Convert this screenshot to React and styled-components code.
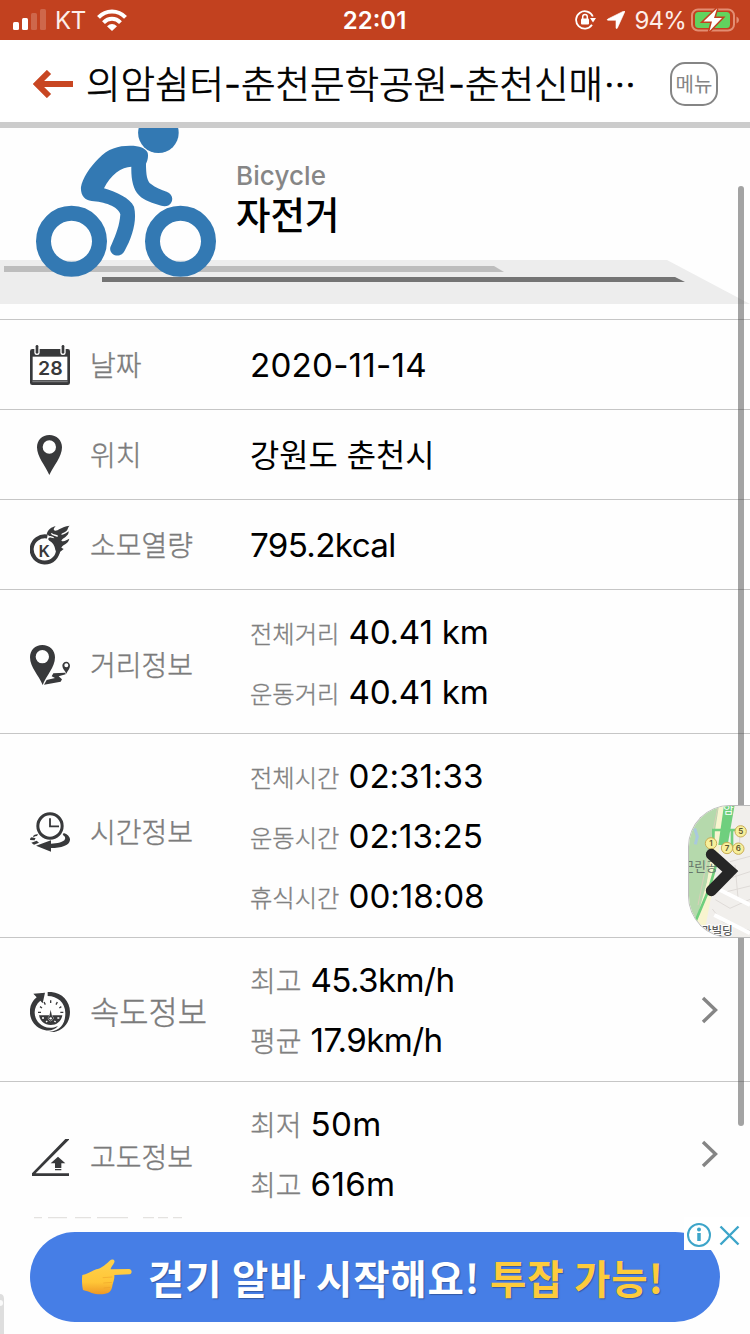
import React from "react";
import styled, { createGlobalStyle } from "styled-components";

const Global = createGlobalStyle`
  * { box-sizing: border-box; }
  body {
    margin: 0;
    background: #fefefe;
    color: #000;
    font-family: Inter, "Noto Sans CJK KR", sans-serif;
  }
`;

const Screen = styled.div`
  position: relative;
  display: flex;
  flex-direction: column;
  width: 750px;
  height: 1334px;
  overflow: hidden;
`;

const StatusBar = styled.div`
  display: flex;
  align-items: center;
  height: 40px;
  flex: none;
  padding: 0 11px 0 13px;
  background: #c2411f;
  color: #fff;
`;

const StatusSide = styled.div`
  display: flex;
  flex: 1;
  align-items: center;
  justify-content: ${(p) => (p.$end ? "flex-end" : "flex-start")};
`;

const StatusText = styled.span`
  padding-top: 1px;
  font-size: 24px;
  line-height: 40px;
  font-weight: ${(p) => (p.$bold ? 600 : 400)};
  letter-spacing: ${(p) => p.$track || 0}px;
  margin: ${(p) => p.$margin || 0};
  color: ${(p) => (p.$bold ? "#fff" : "#fdeee9")};
`;

const Header = styled.header`
  display: flex;
  align-items: center;
  height: 88px;
  flex: none;
  padding: 6px 32px 0 33px;
  border-bottom: 6px solid #ccc;
  background: #fff;
`;

const Title = styled.h1`
  flex: 1;
  margin: 1px 0 0 13px;
  font-size: 37.5px;
  line-height: 60px;
  font-weight: 300;
  -webkit-text-stroke: 0.7px #000;
  white-space: nowrap;
`;

const Dots = styled.span`
  margin-left: 1px;
  vertical-align: 11px;
  line-height: 20px;
`;

const MenuButton = styled.button`
  width: 48px;
  height: 44px;
  padding: 0;
  border: 2px solid #858585;
  border-radius: 15px;
  background: #fff;
  color: #858585;
  font: 400 20px/38px "Noto Sans CJK KR", sans-serif;
`;

const Content = styled.main`
  height: 1089px;
  flex: none;
  overflow: hidden;
`;

const Hero = styled.section`
  position: relative;
  height: 191px;
  padding: 31px 0 0 236px;
`;

const HeroArt = styled.svg`
  position: absolute;
  left: 0;
  top: 0;
`;

const HeroSub = styled.div`
  font-size: 26px;
  line-height: 34px;
  font-weight: 500;
  letter-spacing: 0.1px;
  color: #868686;
`;

const HeroName = styled.div`
  font-size: 37.5px;
  line-height: 46px;
  font-weight: 500;
`;

const Row = styled.div`
  display: flex;
  height: ${(p) => p.$height}px;
  padding-left: 30px;
  border-top: 1px solid #c6c6c6;
`;

const RowHead = styled.div`
  display: flex;
  align-items: center;
  width: 220px;
  height: 40px;
  margin-top: ${(p) => p.$top}px;
`;

const RowLabel = styled.span`
  margin-left: 20px;
  padding-top: ${(p) => p.$drop}px;
  font-size: ${(p) => (p.$large ? 31.8 : 28)}px;
  line-height: 38px;
  font-weight: 300;
  color: #7b7b7b;
  -webkit-text-stroke: 0.4px #7b7b7b;
`;

const Values = styled.div`
  flex: 1;
  padding-top: ${(p) => (p.$single ? 15 : 12)}px;
`;

const ValueLine = styled.div`
  display: flex;
  align-items: center;
  height: 60px;
`;

const Sub = styled.span`
  width: ${(p) => (p.$short ? 60.5 : 98.5)}px;
  padding-top: 3px;
  font-size: ${(p) => (p.$short ? 28 : 24.3)}px;
  line-height: 40px;
  font-weight: 300;
  color: #808080;
  -webkit-text-stroke: 0.35px #808080;
`;

const Value = styled.span`
  padding-top: ${(p) => (p.$korean ? 2 : 0)}px;
  font-size: ${(p) => (p.$korean ? 31.8 : 33.2)}px;
  line-height: 60px;
  letter-spacing: ${(p) => p.$track || 0}px;
  white-space: nowrap;
`;

const Arrow = styled.div`
  display: flex;
  align-items: center;
  padding-right: 32px;
`;

const Scrollbar = styled.div`
  position: absolute;
  left: 738px;
  top: 186px;
  width: 6px;
  height: 940px;
  border-radius: 3px;
  background: rgba(70, 70, 70, 0.49);
`;

const MapTab = styled.div`
  position: absolute;
  right: 0;
  top: 805px;
  width: 62px;
  height: 133px;
  border: 1px solid #bbb;
  border-right: 0;
  border-radius: 42px 0 0 42px;
  overflow: hidden;
  background: #f3f0ea;
`;

const Ad = styled.footer`
  position: relative;
  height: 117px;
  flex: none;
  padding: 15px 30px 0;
  background: #fefefe;
`;

const AdPill = styled.div`
  display: flex;
  align-items: center;
  height: 90px;
  padding-left: 52px;
  border-radius: 45px;
  background: #467ee6;
`;

const AdText = styled.span`
  font: 700 39.5px/60px "Noto Sans CJK KR", sans-serif;
  letter-spacing: 0.8px;
  margin-left: ${(p) => p.$gap}px;
  color: ${(p) => (p.$accent ? "#fdcb3c" : "#fff")};
  text-shadow: 1px 1px 1px rgba(40, 65, 120, 0.6);
  white-space: nowrap;
`;

const AdChoices = styled.div`
  position: absolute;
  right: 0;
  top: 0;
  display: flex;
  align-items: center;
  width: 66px;
  height: 33px;
  background: #fff;
`;

const AdBleed = styled.svg`
  position: absolute;
  left: 0;
  top: 0;
`;

const INK = "#38393b";

const Glyph = ({ children }) => (
  <svg width="40" height="40" viewBox="0 0 120 120" fill={INK}>
    {children}
  </svg>
);

const CalendarIcon = () => (
  <Glyph>
    <rect x="0" y="12" width="120" height="108" rx="7" />
    <rect x="8" y="35" width="104" height="70" fill="#fff" />
    <path d="M7 109H113" stroke="#77787a" strokeWidth="5" />
    <rect x="13" y="-5" width="16" height="35" rx="7" fill="#fff" />
    <rect x="91" y="-5" width="16" height="35" rx="7" fill="#fff" />
    <rect x="17" y="0" width="8" height="26" rx="4" />
    <rect x="95" y="0" width="8" height="26" rx="4" />
    <text x="24" y="90" fontFamily="Inter, sans-serif" fontSize="58" fontWeight="600" textLength="74" lengthAdjust="spacingAndGlyphs">28</text>
  </Glyph>
);

const PinIcon = () => (
  <Glyph>
    <path fillRule="evenodd" d="M58 0C36 0 21 16 21 37C21 66 46 92 58 120C71 92 96 66 96 37C96 16 80 0 58 0ZM58 16A20 20 0 1 1 58 56A20 20 0 1 1 58 16Z" />
  </Glyph>
);

const CalorieIcon = () => (
  <Glyph>
    <path d="M52 34.500A39.500 39.500 0 1 0 84 72" fill="none" stroke={INK} strokeWidth="12" />
    <text x="26" y="95" fontFamily="Liberation Sans, sans-serif" fontSize="49" fontWeight="700" textLength="33" lengthAdjust="spacingAndGlyphs">K</text>
    <path d="M50 28C54 14 64 6 77 4C70 10 69 15 75 17C84 18 91 6 119 2C111 9 116 15 105 21C99 25 94 24 94 29C101 31 108 24 116 19C117 34 99 38 94 47C101 53 111 43 118 41C115 57 99 57 94 68L101 72C93 80 89 78 86 91L76 75C74 60 68 53 58 47C51 42 57 36 64 38L73 40C72 34 61 34 57 32Z" />
    <path d="M64 25C68 31 77 30 83 34" stroke="#fff" strokeWidth="4" fill="none" />
  </Glyph>
);

const DistanceIcon = () => (
  <Glyph>
    <path fillRule="evenodd" d="M37 0C15 0 0 16 0 37C0 67 27 92 38 120C49 92 75 67 75 37C75 16 59 0 37 0ZM37 15A20 20 0 1 1 37 55A20 20 0 1 1 37 15Z" />
    <path fillRule="evenodd" d="M109 50C102 50 97 55 97 62C97 70 105 77 109 86C113 77 120 70 120 62C120 55 115 50 109 50ZM109 55A6 6 0 1 1 109 67A6 6 0 1 1 109 55Z" />
    <path d="M106 83L70 85L65 94L75 99L50 105L42 119L92 110L96 103L86 94L107 88Z" />
  </Glyph>
);

const TimeIcon = () => (
  <Glyph>
    <circle cx="60" cy="42" r="36.500" fill="none" stroke={INK} strokeWidth="9" />
    <path d="M60 19V43H87" fill="none" stroke={INK} strokeWidth="5.500" />
    <path d="M101 63C114 66 121 76 120 84C118 101 94 108 63 108V119L18 101L63 85V95C81 94 102 91 105 81C107 75 103 71 98 69Z" />
    <path d="M9 72Q14 66 24 67L21 72Q14 72 11 76ZM0 84Q0 77 5 76L17 79Q14 82 14 85ZM4 92L20 86L27 92L12 98Z" />
  </Glyph>
);

const SpeedIcon = () => (
  <Glyph>
    <path d="M53 0C90-3 120 24 120 60C120 101 86 125 57 120C95 115 106 92 106 63C106 32 82 12 53 12Z" />
    <path d="M10 5L45 2L38 34L31 26C8 45 10 76 27 93C41 108 62 112 84 102C72 117 51 119 32 110C-5 94-12 40 20 16Z" />
    <path d="M27 70H97C94 88 80 99 62 99C43 99 31 87 27 70Z" />
    <path d="M62 25V33M42 30L46 38M30 44L36 48M24 61H33M82 30L78 38M94 44L88 48M100 61H91" stroke={INK} strokeWidth="4" />
    <path d="M62 53L58 73A7 7 0 1 0 66 73Z" stroke="#fff" strokeWidth="3" paintOrder="stroke" />
    <circle cx="62" cy="79" r="3.500" fill="#fff" />
    <path d="M36 78H42M82 78H88M48 90L52 87M73 87L77 90" stroke="#fff" strokeWidth="4" />
  </Glyph>
);

const AltitudeIcon = () => (
  <Glyph>
    <path d="M6 106L106 3H117V5L17 106H117V114H6Z" />
    <path d="M84 56L106 76H94V90H75V76H62ZM75 93H94V97H75Z" />
  </Glyph>
);

const ICONS = {
  date: CalendarIcon,
  place: PinIcon,
  calorie: CalorieIcon,
  distance: DistanceIcon,
  time: TimeIcon,
  speed: SpeedIcon,
  altitude: AltitudeIcon,
};

const ROWS = [
  { icon: "date", label: "날짜", height: 90, top: 25, values: [["", "2020-11-14"]], track: 0.2 },
  { icon: "place", label: "위치", height: 90, top: 25, values: [["", "강원도 춘천시"]], korean: true },
  { icon: "calorie", label: "소모열량", height: 90, top: 25, values: [["", "795.2kcal"]], track: -0.65 },
  { icon: "distance", label: "거리정보", height: 144, top: 55, values: [["전체거리", "40.41 km"], ["운동거리", "40.41 km"]], track: -0.25 },
  { icon: "time", label: "시간정보", height: 204, top: 78, values: [["전체시간", "02:31:33"], ["운동시간", "02:13:25"], ["휴식시간", "00:18:08"]], track: -0.05 },
  { icon: "speed", label: "속도정보", height: 144, top: 54, large: true, short: true, link: true, values: [["최고", "45.3km/h"], ["평균", "17.9km/h"]], track: -0.6 },
  { icon: "altitude", label: "고도정보", height: 144, top: 56, drop: 0, short: true, link: true, values: [["최저", "50m"], ["최고", "616m"]], track: 0.3 },
];

function InfoRow({ icon, label, height, top, drop = 2, values, korean, large, short, link, track }) {
  const Icon = ICONS[icon];
  return (
    <Row $height={height}>
      <RowHead $top={top}>
        <Icon />
        <RowLabel $large={large} $drop={drop}>{label}</RowLabel>
      </RowHead>
      <Values $single={values.length === 1}>
        {values.map(([sub, value], i) => (
          <ValueLine key={i}>
            {sub && <Sub $short={short}>{sub}</Sub>}
            <Value $korean={korean} $track={track}>{value}</Value>
          </ValueLine>
        ))}
      </Values>
      {link && (
        <Arrow>
          <svg width="17" height="28" viewBox="0 0 17 28" fill="none" stroke="#858585" strokeWidth="3.400">
            <path d="M2 2L14.500 14L2 26" />
          </svg>
        </Arrow>
      )}
    </Row>
  );
}

const SignalIcon = () => (
  <svg width="33" height="22" viewBox="0 0 33 22" fill="#fff">
    <rect x="0" y="13" width="6" height="8" rx="1.500" />
    <rect x="9" y="9" width="6" height="12" rx="1.500" />
    <rect x="18" y="4" width="6" height="17" rx="1.500" opacity=".2" />
    <rect x="27" y="0" width="6" height="21" rx="1.500" opacity=".2" />
  </svg>
);

const WifiIcon = () => (
  <svg width="30" height="22" viewBox="0 0 30 22" fill="none" stroke="#fff" strokeWidth="4">
    <path d="M1.500 8.300C9 .4 21 .4 28.500 8.300" />
    <path d="M6.500 13.600C11.500 8.600 18.500 8.600 23.500 13.600" />
    <path d="M10 17.200Q15 12.800 20 17.200L15 22Z" fill="#fff" stroke="none" />
  </svg>
);

const LockIcon = () => (
  <svg width="21" height="20" viewBox="0 0 21 20" fill="none" stroke="#fff" strokeWidth="1.800">
    <path d="M17.800 6.500A8.700 8.700 0 1 0 17 14.800" />
    <path d="M15 8H21L18 12.500Z" fill="#fff" stroke="none" />
    <rect x="6" y="8.500" width="8" height="6" rx="1" fill="#fff" stroke="none" />
    <path d="M7.700 9V6.800A2.300 2.300 0 0 1 12.300 6.800V9" strokeWidth="1.500" />
  </svg>
);

const LocationIcon = () => (
  <svg width="29" height="18" viewBox="-11 0 29 18" fill="#fff">
    <path d="M17.800.7L10.300 17.200Q9.500 18.500 9 17V9.300H1Q-.7 8.900.8 8L16.500.2Q18.300-.4 17.800.7Z" stroke="#fff" strokeWidth=".6" />
  </svg>
);

const BatteryIcon = () => (
  <svg width="48" height="24" viewBox="0 0 48 24">
    <rect x="1" y="1.500" width="42" height="21" rx="6" fill="none" stroke="#e38e73" strokeWidth="2" />
    <rect x="4" y="4" width="35" height="16" rx="3.500" fill="#62d35e" />
    <path d="M45.500 8.500Q48 9.500 48 12T45.500 15.500Z" fill="#e38e73" />
    <path d="M26 .5L12.500 13.500H21L18.500 23L31 10H23Z" fill="#fff" stroke="#c2411f" strokeWidth="3" paintOrder="stroke" />
  </svg>
);

const BackIcon = () => (
  <svg width="40" height="28" viewBox="0 0 40 28" fill="none" stroke="#c84622" strokeWidth="6">
    <path d="M4 14H40M16 2L4 14L16 26" />
  </svg>
);

const HandIcon = () => (
  <svg width="50" height="36" viewBox="0 0 150 108">
    <defs>
      <linearGradient id="skin" x1="0" y1="0" x2="0" y2="1">
        <stop offset="0" stopColor="#ffd24d" />
        <stop offset=".65" stopColor="#ffc637" />
        <stop offset="1" stopColor="#ee9825" />
      </linearGradient>
    </defs>
    <path fill="url(#skin)" d="M1 48C15 46 26 38 43 31C55 28 66 22 83 5C89-1 100 1 97 10C94 19 85 26 86 31L142 30C151 32 151 44 143 46L97 48C98 60 94 67 92 76C90 87 88 98 78 102C62 108 42 106 29 102C20 97 13 96 3 93C0 80-1 62 1 48Z" />
    <path d="M62 56L91 54M64 72L90 70M65 87L86 85" stroke="#e99c28" strokeWidth="3" fill="none" opacity=".5" />
  </svg>
);

const STATIONS = [["5", 158, 79], ["1", 69, 115], ["7", 117, 129], ["6", 151, 131]];

const MapPreview = () => (
  <svg width="62" height="133" viewBox="3 3 186 399">
    <rect width="190" height="404" fill="#f1efec" />
    <path d="M0 0H96L79 135L52 256L20 399H0Z" fill="#b5d9ac" />
    <path d="M93 0H115L76 240L46 399H10L57 231Z" fill="#f8f4cf" />
    <path d="M91 0L30 300" stroke="#d8cfb8" strokeWidth="3" fill="none" />
    <path d="M20 70L28 95L22 118" stroke="#a9c9dd" strokeWidth="9" fill="none" />
    <path d="M108 0H140L119 120H91Z" fill="#6fcf7e" />
    <path d="M76 112V75H150M132 75V125M91 155L64 250L22 350" stroke="#6fcf7e" strokeWidth="8" fill="none" />
    <path d="M126 170L186 154M125 220L186 200M104 263L186 243M82 284L126 310L186 283M73 312L103 350L186 377M155 96V150M141 180L151 289" stroke="#dedad7" strokeWidth="3" fill="none" />
    <path d="M92 253L186 300M79 330L186 385" stroke="#fff" strokeWidth="12" />
    <text x="106" y="27" fontSize="34" fontFamily="Noto Sans CJK KR, sans-serif" fill="#fff">암</text>
    <text x="-16" y="199" fontSize="38" fontFamily="Noto Sans CJK KR, sans-serif" fill="#67766a">근린공</text>
    <text x="38" y="390" fontSize="35" fontWeight="500" fontFamily="Noto Sans CJK KR, sans-serif" fill="#5c5c5c" stroke="#fff" strokeWidth="5" paintOrder="stroke">관빌딩</text>
    {STATIONS.map(([n, x, y]) => (
      <g key={n}>
        <circle cx={x} cy={y} r="17" fill="#f7ef9b" stroke="#c8ac55" strokeWidth="3" />
        <text x={x} y={y + 8} textAnchor="middle" fontSize="24" fontWeight="600" fontFamily="Inter, sans-serif" fill="#5c542f">{n}</text>
      </g>
    ))}
    <path d="M70 148L127 199L70 257" fill="none" stroke="#262626" strokeWidth="33" strokeLinecap="round" strokeLinejoin="miter" />
  </svg>
);

export default function App() {
  return (
    <Screen>
      <Global />
      <StatusBar>
        <StatusSide>
          <SignalIcon />
          <StatusText $margin="0 11px 0 9px" $track={-0.5}>KT</StatusText>
          <WifiIcon />
        </StatusSide>
        <StatusText $bold $margin="0 3px 0 0">22:01</StatusText>
        <StatusSide $end>
          <LockIcon />
          <LocationIcon />
          <StatusText $margin="0 5px 0 9px" $track={-0.8}>94%</StatusText>
          <BatteryIcon />
        </StatusSide>
      </StatusBar>
      <Header>
        <BackIcon />
        <Title>의암쉼터-춘천문학공원-춘천신매<Dots>…</Dots></Title>
        <MenuButton>메뉴</MenuButton>
      </Header>
      <Content>
        <Hero>
          <HeroArt width="750" height="191" viewBox="0 128 750 191">
            <path d="M0 260H667L750 304H0Z" fill="#ededed" />
            <path d="M4 266H494L504 272H4Z" fill="#bdbdbd" />
            <path d="M102 277H675L685 282H102Z" fill="#747474" />
            <g fill="none" stroke="#3379b3" strokeWidth="15">
              <circle cx="71.500" cy="241.300" r="28" />
              <circle cx="180.500" cy="241.300" r="28" />
            </g>
            <circle cx="158.400" cy="132.800" r="20.300" fill="#3379b3" />
            <path
              transform="translate(0 120) scale(.33333)"
              fill="#3379b3"
              d="M390 77C420 77 436 84 443 98C446 110 442 123 438 131C438 163 441 184 453 192C466 203 484 210 500 215C514 220 520 233 515 245C510 257 497 261 484 257C459 250 432 242 417 226C399 207 393 177 394 140C366 140 330 165 312 205C350 216 390 235 402 260C412 300 397 352 374 392C366 407 350 411 338 402C328 394 329 383 335 373C348 344 359 315 361 283C355 259 311 245 275 243C254 242 241 225 243 201C247 175 270 141 295 116C325 85 354 77 390 77Z"
            />
          </HeroArt>
          <HeroSub>Bicycle</HeroSub>
          <HeroName>자전거</HeroName>
        </Hero>
        {ROWS.map((row) => (
          <InfoRow key={row.icon} {...row} />
        ))}
      </Content>
      <Ad>
        <AdBleed width="200" height="117" viewBox="0 0 200 117" fill="none">
          <path d="M34 .5H42M48 .5H67M75 .5H91M97 .5H128M143 .5H154M158 .5H168M173 .5H182" stroke="#e4e2e0" strokeWidth="1.500" />
          <path d="M0 77Q4 77 4 82V117H0Z" fill="#dedede" />
          <circle cx="0" cy="86" r="3" fill="#fafafa" />
        </AdBleed>
        <AdPill>
          <HandIcon />
          <AdText $gap={16}>걷기 알바 시작해요!</AdText>
          <AdText $accent $gap={10}>투잡 가능!</AdText>
        </AdPill>
        <AdChoices>
          <svg width="66" height="33" viewBox="0 0 66 33" fill="none" stroke="#3da5c9" strokeWidth="2">
            <circle cx="15" cy="18" r="11" />
            <path d="M15 16V24" strokeWidth="3.500" />
            <circle cx="15" cy="12.500" r="1" />
            <path d="M36.500 9.500L54.500 27.500M54.500 9.500L36.500 27.500" strokeWidth="2.400" />
          </svg>
        </AdChoices>
      </Ad>
      <Scrollbar />
      <MapTab>
        <MapPreview />
      </MapTab>
    </Screen>
  );
}
